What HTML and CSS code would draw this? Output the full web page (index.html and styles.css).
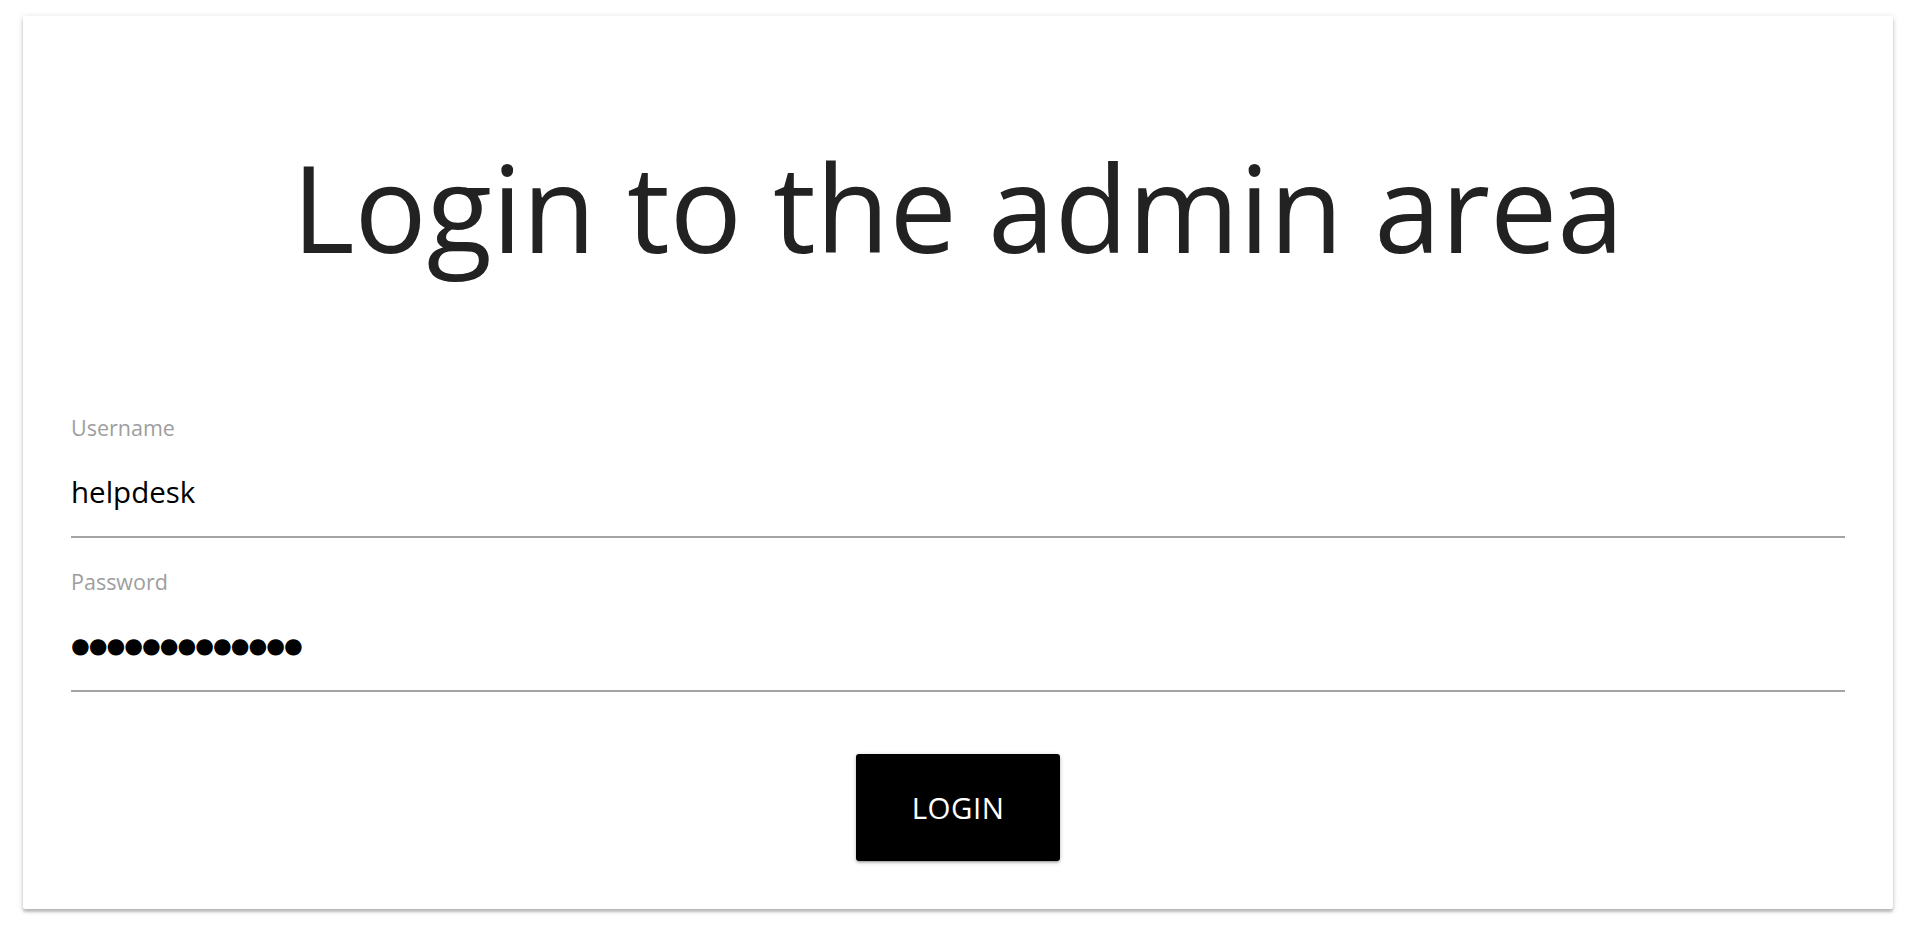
FILE: index.html
```html
<!DOCTYPE html>
<html lang="en">
<head>
<meta charset="utf-8">
<title>Admin login</title>
<link rel="stylesheet" href="styles.css">
</head>
<body>
  <main class="card">
    <h1 class="title">Login to the admin area</h1>
    <form class="form" onsubmit="return false;">
      <div class="field">
        <label class="field-label" for="username">Username</label>
        <input class="field-input" id="username" type="text" value="helpdesk">
      </div>
      <div class="field">
        <label class="field-label" for="password">Password</label>
        <div class="field-input field-mask" id="password">●●●●●●●●●●●●●</div>
      </div>
      <div class="actions">
        <button class="btn" type="submit">Login</button>
      </div>
    </form>
  </main>
</body>
</html>
```

FILE: styles.css
```css
html, body {
  margin: 0;
  padding: 0;
  background: #ffffff;
}

body {
  font-family: "Open Sans", "Noto Sans", sans-serif;
  color: #000;
  padding-bottom: 30px;
}

.card {
  margin: 16px 22px 0 23px;
  height: 893px;
  box-sizing: border-box;
  padding: 120px 48px 0 48px;
  background: #fff;
  border-radius: 2px;
  box-shadow: 0 3px 3px 0 rgba(0,0,0,0.22), 0 1px 6px 0 rgba(0,0,0,0.14);
  display: flex;
  flex-direction: column;
}

.title {
  margin: 0;
  font-size: 120px;
  line-height: 142px;
  font-weight: 400;
  color: #222;
  text-align: center;
}

.form {
  display: flex;
  flex-direction: column;
  margin-top: 138px;
}

.field {
  display: flex;
  flex-direction: column;
}

.field + .field {
  margin-top: 32px;
}

.field-label {
  font-size: 21.5px;
  line-height: 24px;
  color: #9e9e9e;
}

.field-input {
  margin-top: 32px;
  height: 40px;
  padding: 0 0 24px 0;
  border: none;
  border-bottom: 2px solid #a3a3a3;
  outline: none;
  background: transparent;
  font-family: "Open Sans", "Noto Sans", sans-serif;
  font-size: 29.5px;
  line-height: 40px;
  color: #000;
  box-sizing: content-box;
  width: 100%;
}

.field-mask {
  font-family: "DejaVu Sans", sans-serif;
  font-size: 21.5px;
  letter-spacing: -1px;
}

.actions {
  display: flex;
  justify-content: center;
  margin-top: 62px;
}

.btn {
  width: 204px;
  height: 107px;
  border: none;
  border-radius: 3px;
  background: #000;
  color: #fff;
  font-family: "Open Sans", "Noto Sans", sans-serif;
  font-size: 29.5px;
  text-transform: uppercase;
  letter-spacing: 0.5px;
  cursor: pointer;
  box-shadow: 0 2px 2px 0 rgba(0,0,0,0.14), 0 3px 1px -2px rgba(0,0,0,0.12), 0 1px 5px 0 rgba(0,0,0,0.2);
}
```
